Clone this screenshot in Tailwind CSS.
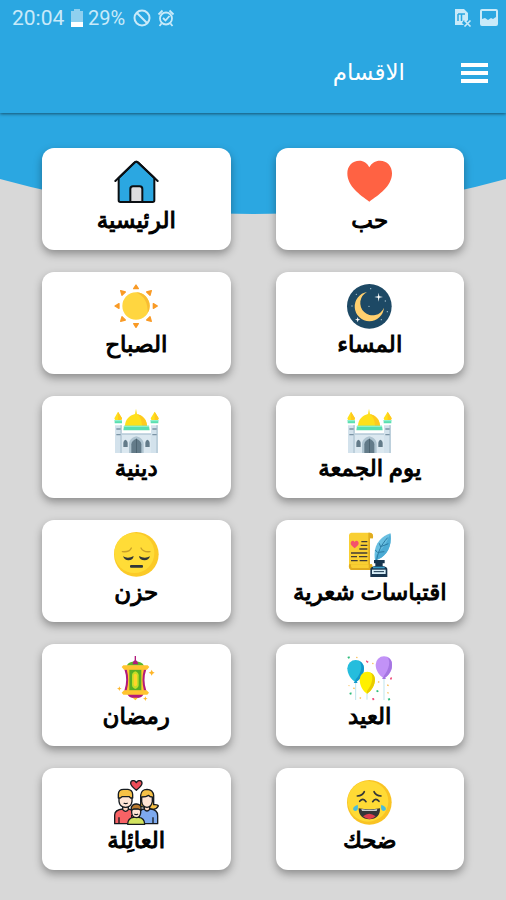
<!doctype html>
<html lang="ar">
	<head>
		<meta charset="utf-8" />
		<meta name="viewport" content="width=device-width, initial-scale=1" />
		<title>الاقسام</title>
		<script src="https://cdn.jsdelivr.net/npm/@tailwindcss/browser@4"></script>
	</head>

	<body class="min-h-screen bg-[#d8d8d8] font-['Roboto','DejaVu_Sans',sans-serif]">
		<!-- shared icons -->
		<svg class="hidden">
			<symbol id="mosque" viewBox="0 0 135 135">
				<path fill="#d3e2ec" d="M3 52h21v83H3zM111 52h21v83h-21z" />
				<path fill="#dbe8f0" d="M24 76h87v59H24z" />
				<path fill="#bdd0dc" d="M24 76h87v5H24zM18 52h6v83h-6zM126 52h6v83h-6z" />
				<path fill="#7b94a5" d="M7 61h13v4H7zM7 78h13v4H7zM115 61h13v4h-13zM115 78h13v4h-13z" />
				<path fill="#ffe01b" d="M33 55c0-20 13-33 30-37l3-16 3 16c17 4 30 17 30 37z" />
				<path fill="#ffc91f" d="M69 18c17 4 30 17 30 37H84c0-17-5-29-15-37z" />
				<path fill="#ffe01b" d="M1 31 12 11l12 20-3 7H4zM110 31l12-20 12 20-3 7h-18z" />
				<path fill="#ffc91f" d="m12 11 12 20-3 7h-9zM122 11l12 20-3 7h-9z" />
				<path fill="#59dfb0" d="M30 53h75l2 14H28zM2 36h22v10H2zM110 36h23v10h-23z" />
				<path fill="#8ef0cd" d="M2 36h22v4H2zM110 36h23v4h-23zM30 53h75v4H29z" />
				<path fill="#afc4d0" d="M45 135v-27c0-12 10-20 22-23 12 3 22 11 22 23v27z" />
				<path fill="#637b89" d="M52 135v-26c0-8 7-13 15-17 8 4 15 9 15 17v26z" />
				<path fill="#4d6471" d="M66 92h3v43h-3z" />
				<path fill="#637b89" d="M28 117v-12c0-5 3-8 6-10 4 2 7 5 7 10v12zM94 117v-12c0-5 3-8 6-10 4 2 7 5 7 10v12z" />
			</symbol>
		</svg>

		<header class="relative z-10 bg-[#2ba7e1] pb-3 text-white shadow-[0_1px_3px_rgba(0,0,0,0.5)]">
			<div class="flex h-9 items-center justify-between pl-3 pr-2 text-[#c9eaf9]">
				<div class="flex items-center">
					<span class="w-[54px] text-[21px] leading-9">20:04</span>
					<svg class="ml-1 h-[18px] w-[14px]" viewBox="0 0 14 18">
						<path fill="#8fd0ef" d="M4 0h6v2h3v12H1V2h3z" />
						<path fill="#fff" d="M1 13h12v5H1z" />
					</svg>
					<span class="ml-1 text-[20px] leading-9">29%</span>
					<svg class="ml-2 size-[18px]" viewBox="0 0 18 18" fill="none" stroke="currentColor" stroke-width="2">
						<circle cx="9" cy="9" r="7.5" />
						<path d="m4 4 10 10" />
					</svg>
					<svg class="ml-1.5 size-[18px]" viewBox="0 0 18 18" fill="none" stroke="currentColor" stroke-width="1.8">
						<circle cx="9" cy="9.500" r="6" />
						<path d="M1.500 5.500 5.500 1.500M16.500 5.500l-4-4M4.500 14.500l-2 2.500M13.500 14.500l2 2.500M6 9l2.500 2.500L12.500 7" />
					</svg>
				</div>
				<div class="flex items-center gap-2">
					<svg class="size-[18px]" viewBox="0 0 18 18">
						<path fill="currentColor" d="M1 0h9l4 4v7l-2 2-2-2-2 3 2 2H1z" />
						<path fill="none" stroke="#2ba7e1" stroke-width="1.5" d="M4 5v7M4 5h7M7.500 5v7" />
						<path fill="none" stroke="currentColor" stroke-width="1.6" d="m10.500 11.500 6 6M16.500 11.500l-6 6" />
					</svg>
					<svg class="size-[18px]" viewBox="0 0 18 18">
						<rect x="1" y="1" width="16" height="15" rx="1" fill="none" stroke="currentColor" stroke-width="2" />
						<path fill="currentColor" d="M2 10l3-1 3 2 3-2 2 1 3-2v8H2z" />
					</svg>
				</div>
			</div>
			<div dir="rtl" class="flex h-[65px] items-center px-[18px] pt-2">
				<button type="button" aria-label="القائمة" class="flex w-[27px] flex-col gap-1">
					<span class="h-1 w-full bg-white"></span>
					<span class="h-1 w-full bg-white"></span>
					<span class="h-1 w-full bg-white"></span>
				</button>
				<h1 class="mr-14 text-[23px] leading-8">الاقسام</h1>
			</div>
		</header>

		<main class="relative">
			<!-- curved backdrop -->
			<svg class="absolute inset-x-0 top-0 h-[101px] w-full" viewBox="0 0 506 101" preserveAspectRatio="none">
				<path fill="#2ba7e1" d="M0 0h506v66Q253 136 0 66z" />
			</svg>

			<nav
				dir="rtl"
				class="relative grid grid-cols-2 gap-x-[45px] gap-y-[22px] px-[42px] pb-[29px] pt-[35px] text-[23px] leading-8 text-black [-webkit-text-stroke:1px_black]"
			>
				<a href="#love" class="flex h-[102px] flex-col items-center rounded-xl bg-white pt-3 shadow-[0_4px_9px_rgba(0,0,0,0.35)]">
					<svg class="size-[45px]" viewBox="0 0 135 135">
						<path fill="#ff6243" d="M67 125C39 105 1 79 1 40 1 18 16 2 37 2c13 0 24 7 30 20C73 9 85 2 99 2c21 0 36 16 36 38 0 39-40 65-68 85z" />
					</svg>
					<span>حب</span>
				</a>
				<a href="#home" class="flex h-[102px] flex-col items-center rounded-xl bg-white pt-3 shadow-[0_4px_9px_rgba(0,0,0,0.35)]">
					<svg class="size-[45px]" viewBox="0 0 135 135" stroke="#0b0f13" stroke-width="6" stroke-linejoin="round" stroke-linecap="round">
						<path fill="#2ba7e1" d="M14 54v67q0 5 5 5h97q5 0 5-5V54L73 8q-6-5-12 0z" />
						<path fill="none" d="M4 63 61 8q6-5 12 0l58 55" />
						<path fill="#dcdcdf" d="M49 126V87q0-8 8-8h20q8 0 8 8v39z" />
					</svg>
					<span>الرئيسية</span>
				</a>

				<a href="#evening" class="flex h-[102px] flex-col items-center rounded-xl bg-white pt-3 shadow-[0_4px_9px_rgba(0,0,0,0.35)]">
					<svg class="size-[45px]" viewBox="0 0 135 135">
						<circle cx="67" cy="67" r="67" fill="#1d4965" />
						<path fill="#ffd06f" d="M60 24A44 44 0 1 0 111 71 37 37 0 1 1 60 24z" />
						<path fill="#fff" d="m95 26 2 11 11 2-11 2-2 12-2-12-11-2 11-2zM32 99l2 6 6 2-6 2-2 6-2-6-6-2 6-2z" />
						<g fill="#a8c5d4">
							<circle cx="66" cy="67" r="2" />
							<circle cx="115" cy="51" r="2" />
							<circle cx="28" cy="31" r="2" />
							<circle cx="103" cy="107" r="2" />
							<circle cx="71" cy="14" r="2" />
							<circle cx="15" cy="66" r="2" />
							<circle cx="121" cy="83" r="2" />
						</g>
					</svg>
					<span>المساء</span>
				</a>
				<a href="#morning" class="flex h-[102px] flex-col items-center rounded-xl bg-white pt-3 shadow-[0_4px_9px_rgba(0,0,0,0.35)]">
					<svg class="size-[45px]" viewBox="0 0 135 135">
						<circle cx="66" cy="66" r="41" fill="#ffd640" />
						<path fill="#f8bd32" d="M66 25a41 41 0 0 1 35 62q1-47-35-62z" />
						<g fill="#f99a25" stroke="#f99a25" stroke-width="4" stroke-linejoin="round">
							<path d="m66 3 7 11H59zM66 130l7-11H59zM3 66l12-7v14zM130 66l-12-7v14z" />
							<path d="m20 20 14 4-10 10zM112 20l-14 4 10 10zM20 112l4-14 10 10zM112 112l-4-14-10 10z" />
						</g>
					</svg>
					<span>الصباح</span>
				</a>

				<a href="#friday" class="flex h-[102px] flex-col items-center rounded-xl bg-white pt-3 shadow-[0_4px_9px_rgba(0,0,0,0.35)]">
					<svg class="size-[45px]"><use href="#mosque" /></svg>
					<span>يوم الجمعة</span>
				</a>
				<a href="#religious" class="flex h-[102px] flex-col items-center rounded-xl bg-white pt-3 shadow-[0_4px_9px_rgba(0,0,0,0.35)]">
					<svg class="size-[45px]"><use href="#mosque" /></svg>
					<span>دينية</span>
				</a>

				<a href="#poetry" class="flex h-[102px] flex-col items-center rounded-xl bg-white pt-3 shadow-[0_4px_9px_rgba(0,0,0,0.35)]">
					<svg class="size-[45px]" viewBox="0 0 135 135">
						<path fill="#f9cf32" d="M13 2h56q11 1 9 17H69v78h6q5 17-6 17H14q-10-1-8-17V9q1-6 7-7z" />
						<path fill="#e0ac20" d="M64 2h5q11 1 9 17H64zM64 19h5v78h-5zM6 97h69q5 17-6 17H14q-10-1-8-17z" />
						<path fill="#f9cf32" d="M12 97h53v11H15q-4-3-3-11z" />
						<path fill="#f4516c" d="M23 49C15 42 11 39 11 34c0-9 9-10 12-4 3-6 12-5 12 4 0 5-4 8-12 15z" />
						<path stroke="#413b37" stroke-width="4" d="M43 29h18M41 40h20M37 51h24M12 63h49M12 74h18M36 74h25M12 86h20M38 86h23" />
						<path fill="#69bfe1" d="M130 4C103 14 76 36 84 85c31-7 53-38 46-81z" />
						<path fill="#4cabd4" d="M130 4c7 43-15 74-46 81l4-17c17-15 32-35 42-64z" />
						<path fill="none" stroke="#2a7ba3" stroke-width="3" d="M88 90c4-29 14-51 34-73M92 62l-7-8M101 45l-4-11M94 61l18-2M104 43l20-8" />
						<path fill="#17344d" d="M81 84h32v10h-6v8q14 2 14 10v23H70v-23q0-8 15-10v-8h-4z" />
						<path fill="#d7eef8" d="M75 113h41v13H75z" />
						<path fill="#3a9ac5" d="M78 104h35v5H78z" />
						<path stroke="#17344d" stroke-width="3" d="M80 119h31" />
					</svg>
					<span>اقتباسات شعرية</span>
				</a>
				<a href="#sadness" class="flex h-[102px] flex-col items-center rounded-xl bg-white pt-3 shadow-[0_4px_9px_rgba(0,0,0,0.35)]">
					<svg class="size-[45px]" viewBox="0 0 135 135">
						<circle cx="67" cy="67" r="67" fill="#fbca27" />
						<circle cx="61" cy="63" r="60" fill="#ffdc37" />
						<g fill="none" stroke="#c9a027" stroke-width="4" stroke-linecap="round">
							<path d="M25 59q22 2 27-11M81 48q6 13 27 11" />
						</g>
						<g fill="#303638">
							<path d="M27 73q15 9 32-1-2 13-16 13-11 0-16-12zM75 72q17 10 33 1-4 12-16 12-15 0-17-13z" />
							<rect x="48" y="99" width="39" height="8" rx="3" />
						</g>
					</svg>
					<span>حزن</span>
				</a>

				<a href="#eid" class="flex h-[102px] flex-col items-center rounded-xl bg-white pt-3 shadow-[0_4px_9px_rgba(0,0,0,0.35)]">
					<svg class="size-[45px]" viewBox="0 0 135 135">
						<path fill="none" stroke="#bfe5ed" stroke-width="3" d="M26 78v54M60 105v26M111 66v66" />
						<path fill="#25bddd" d="M26 79C12 71 1 54 1 37a25 25 0 0 1 50 0c0 17-11 34-25 42z" />
						<path fill="#1297cb" d="M36 14c10 9 11 34-10 56v9c14-8 25-25 25-42 0-11-6-19-15-23zM20 81h12l-6-9z" />
						<path fill="#c292f7" d="M111 67C97 59 86 43 86 26a25 25 0 0 1 50 0c0 17-11 33-25 41z" />
						<path fill="#a676e2" d="M121 3c10 11 7 34-10 56v8c14-8 24-24 24-41 0-10-5-19-14-23zM105 69h12l-6-9z" />
						<path fill="#fff000" d="M60 113C47 106 38 88 38 70a23 23 0 0 1 46 0c0 18-11 36-24 43z" />
						<path fill="#eacb00" d="M71 50c9 11 6 33-11 55v8c13-7 24-25 24-43 0-9-5-17-13-20z" />
						<path fill="#31bd7c" d="m1 3 6-2 2 5-5 2zM87 104l6-2 2 5-5 2zM7 111l6-2 1 6-5 1zM122 128l6-2 2 5-5 3z" />
						<path fill="#f04f7c" d="m58 13 7 4-3 4-5-4zM129 66l5-3 1 7-5 1zM75 127l6-1 1 6-5 1z" />
						<path fill="#f9c05c" d="m28 2 4 1-1 4-4-1zM76 20l4 1-1 4-4-1zM20 94l4 2-2 4-4-2zM94 75l4 2-2 4-4-2zM121 85l5 2-2 4-4-2zM39 123l4 2-2 4-4-2zM5 87l3 1-1 3-3-1zM122 108l4 2-2 3-4-2z" />
					</svg>
					<span>العيد</span>
				</a>
				<a href="#ramadan" class="flex h-[102px] flex-col items-center rounded-xl bg-white pt-3 shadow-[0_4px_9px_rgba(0,0,0,0.35)]">
					<svg class="size-[45px]" viewBox="0 0 135 135">
						<path stroke="#b21a7d" stroke-width="4" d="M64 0v14" />
						<path fill="#5bb62a" d="M38 29q6-12 26-13 20 1 26 13z" />
						<path fill="#b21a7d" d="M56 25q1-12 8-13 7 1 8 13zM31 40h66Q86 72 97 104H31Q42 72 31 40z" />
						<path fill="#ffc52e" d="M38 40h52Q81 72 90 104H38Q47 72 38 40z" />
						<path fill="#55ae25" d="M46 40h36v64H46z" />
						<path fill="#c2dd26" d="M54 58q0-8 10-12 10 4 10 12v29q0 8-10 12-10-4-10-12z" />
						<path fill="#ffd42b" d="M59 57q5-8 10 0v30q-5 8-10 0z" />
						<path fill="#b21a7d" d="M40 113h49q-4 11-17 13H57q-13-2-17-13z" />
						<path fill="#ffc52e" d="M28 28h73l5 5-7 8H30l-7-8zM30 103h68l7 7-5 6H28l-5-6zM56 125h16l-8 8z" />
						<path fill="#ffb527" d="m113 41 3 6 6 3-6 3-3 6-3-6-6-3 6-3zM16 91l2 5 5 2-5 2-2 5-2-5-5-2 5-2zM94 121l2 5 5 2-5 2-2 5-2-5-5-2 5-2z" />
					</svg>
					<span>رمضان</span>
				</a>

				<a href="#laugh" class="flex h-[102px] flex-col items-center rounded-xl bg-white pt-3 shadow-[0_4px_9px_rgba(0,0,0,0.35)]">
					<svg class="size-[45px]" viewBox="0 0 135 135">
						<circle cx="67" cy="67" r="67" fill="#f9c323" />
						<circle cx="63" cy="64" r="61" fill="#ffda35" />
						<g fill="none" stroke="#343638" stroke-width="5" stroke-linecap="round">
							<path d="M31 48q16-1 21-13M81 35q5 12 21 13M38 64q10-12 19 1M77 65q9-13 19-1" />
						</g>
						<path fill="#343638" d="M35 85q32 6 64 0 1 32-32 33-32-1-32-33z" />
						<path fill="#fff" d="M43 88q25 3 48 0l-2 4H45z" />
						<path fill="#df3d4d" d="M48 109q18-15 38 0-18 17-38 0z" />
						<path fill="#49bddb" d="M32 74q4 18-7 19-10-2-5-11 3-4 12-8zM103 74q-4 18 7 19 10-2 5-11-3-4-12-8z" />
					</svg>
					<span>ضحك</span>
				</a>
				<a href="#family" class="flex h-[102px] flex-col items-center rounded-xl bg-white pt-3 shadow-[0_4px_9px_rgba(0,0,0,0.35)]">
					<svg class="size-[45px]" viewBox="0 0 135 135" stroke="#171b20" stroke-width="4" stroke-linejoin="round">
						<path fill="#ef4d58" d="M67 31C56 22 50 17 50 10 50 0 63-1 67 8 71-1 84 0 84 10c0 7-6 12-17 21z" />
						<path fill="#f86265" d="M2 131v-26q0-16 25-18h14q24 2 24 18v26z" />
						<path fill="#fbd3bd" d="M26 75h17v14q-8 10-17 0z" />
						<path fill="#ffe4d5" d="M15 48h39v16q-2 18-19 18-18 0-20-18z" />
						<path fill="#f7c146" d="M13 54V43q0-15 16-15h13q14 2 14 16v10h-6l-4-4H24l-5 4z" />
						<path fill="#f7c146" d="M80 79V46q2-18 19-18 18 1 20 18v28q13-1 14 4-8 15-26 8z" />
						<path fill="#7da9ee" d="M75 131v-31q2-13 18-13h16q22 2 22 20v24z" />
						<path fill="#fbd3bd" d="M91 76h16v12q-8 10-16 0z" />
						<path fill="#ffe4d5" d="M83 51q14 0 21-5 3 5 11 5v14q-3 17-16 17-14-1-16-17z" />
						<path fill="#d2e35f" d="M41 133q0-19 18-21h15q18 2 18 21z" />
						<path fill="#ffe4d5" d="M53 86h27v13q-2 14-13 14-12-1-14-14z" />
						<path fill="#b8792e" d="M52 91v-9q4-11 16-10 12 1 13 10v9l-8-4H59z" />
						<path fill="none" d="M15 112v19M53 105v8M117 112v19M29 69q6 4 12 0M61 102q6 4 11 0" />
					</svg>
					<span>العائِلة</span>
				</a>
			</nav>
		</main>
	</body>
</html>
